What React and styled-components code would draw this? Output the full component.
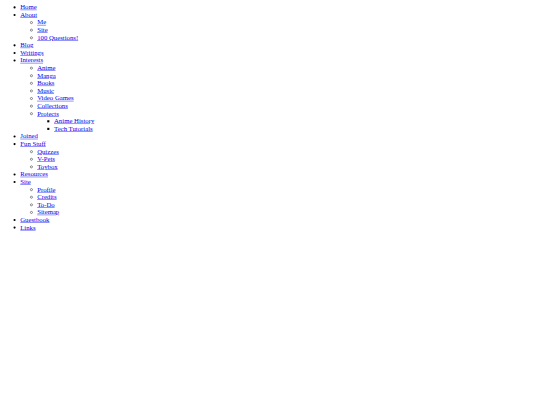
import React from 'react';
import styled, { createGlobalStyle } from 'styled-components';

const GlobalStyle = createGlobalStyle`
html, body {
  margin: 0;
  background: #fff;
}
`

const menu = [
  { label: 'Home' },
  { label: 'About', children: [{ label: 'Me' }, { label: 'Site' }, { label: '100 Questions!' }] },
  { label: 'Blog' },
  { label: 'Writings' },
  {
    label: 'Interests',
    children: [
      { label: 'Anime' },
      { label: 'Manga' },
      { label: 'Books' },
      { label: 'Music' },
      { label: 'Video Games' },
      { label: 'Collections' },
      { label: 'Projects', children: [{ label: 'Anime History' }, { label: 'Tech Tutorials' }] },
    ],
  },
  { label: 'Joined' },
  { label: 'Fun Stuff', children: [{ label: 'Quizzes' }, { label: 'V-Pets' }, { label: 'Toybox' }] },
  { label: 'Resources' },
  {
    label: 'Site',
    children: [{ label: 'Profile' }, { label: 'Credits' }, { label: 'To-Do' }, { label: 'Sitemap' }],
  },
  { label: 'Guestbook' },
  { label: 'Links' },
]

function MenuList({ items, depth = 0 }) {
  return (
    <List depth={depth}>
      {items.map((item, i) => (
        <Item key={i}>
          <Link href='#'>{item.label}</Link>
          {item.children && <MenuList items={item.children} depth={depth + 1} />}
        </Item>
      ))}
    </List>
  )
}

function App() {
  return (
    <>
      <GlobalStyle />
      <Frame>
        <Page>
          <Nav>
            <MenuList items={menu} />
          </Nav>
        </Page>
      </Frame>
    </>
  )
}

export default App

const Frame = styled.div`
width: 540px;
height: 405px;
overflow: hidden;
`

// laid out at 1280px wide and shown shrunk to the 540px window
const Page = styled.div`
width: 1280px;
height: 960px;
padding: 8px;
box-sizing: border-box;
font-family: "Liberation Serif", "Times New Roman", serif;
font-size: 16px;
line-height: 18px;
color: #000;
transform: scale(0.421875);
transform-origin: 0 0;
`

const Nav = styled.nav`
display: block;
`

const List = styled.ul`
margin: 0;
padding-left: 40px;
list-style-type: ${props => ['disc', 'circle', 'square'][props.depth] || 'square'};
`

const Item = styled.li`
display: list-item;
`

const Link = styled.a`
color: #0000ee;
text-decoration: underline;
`
